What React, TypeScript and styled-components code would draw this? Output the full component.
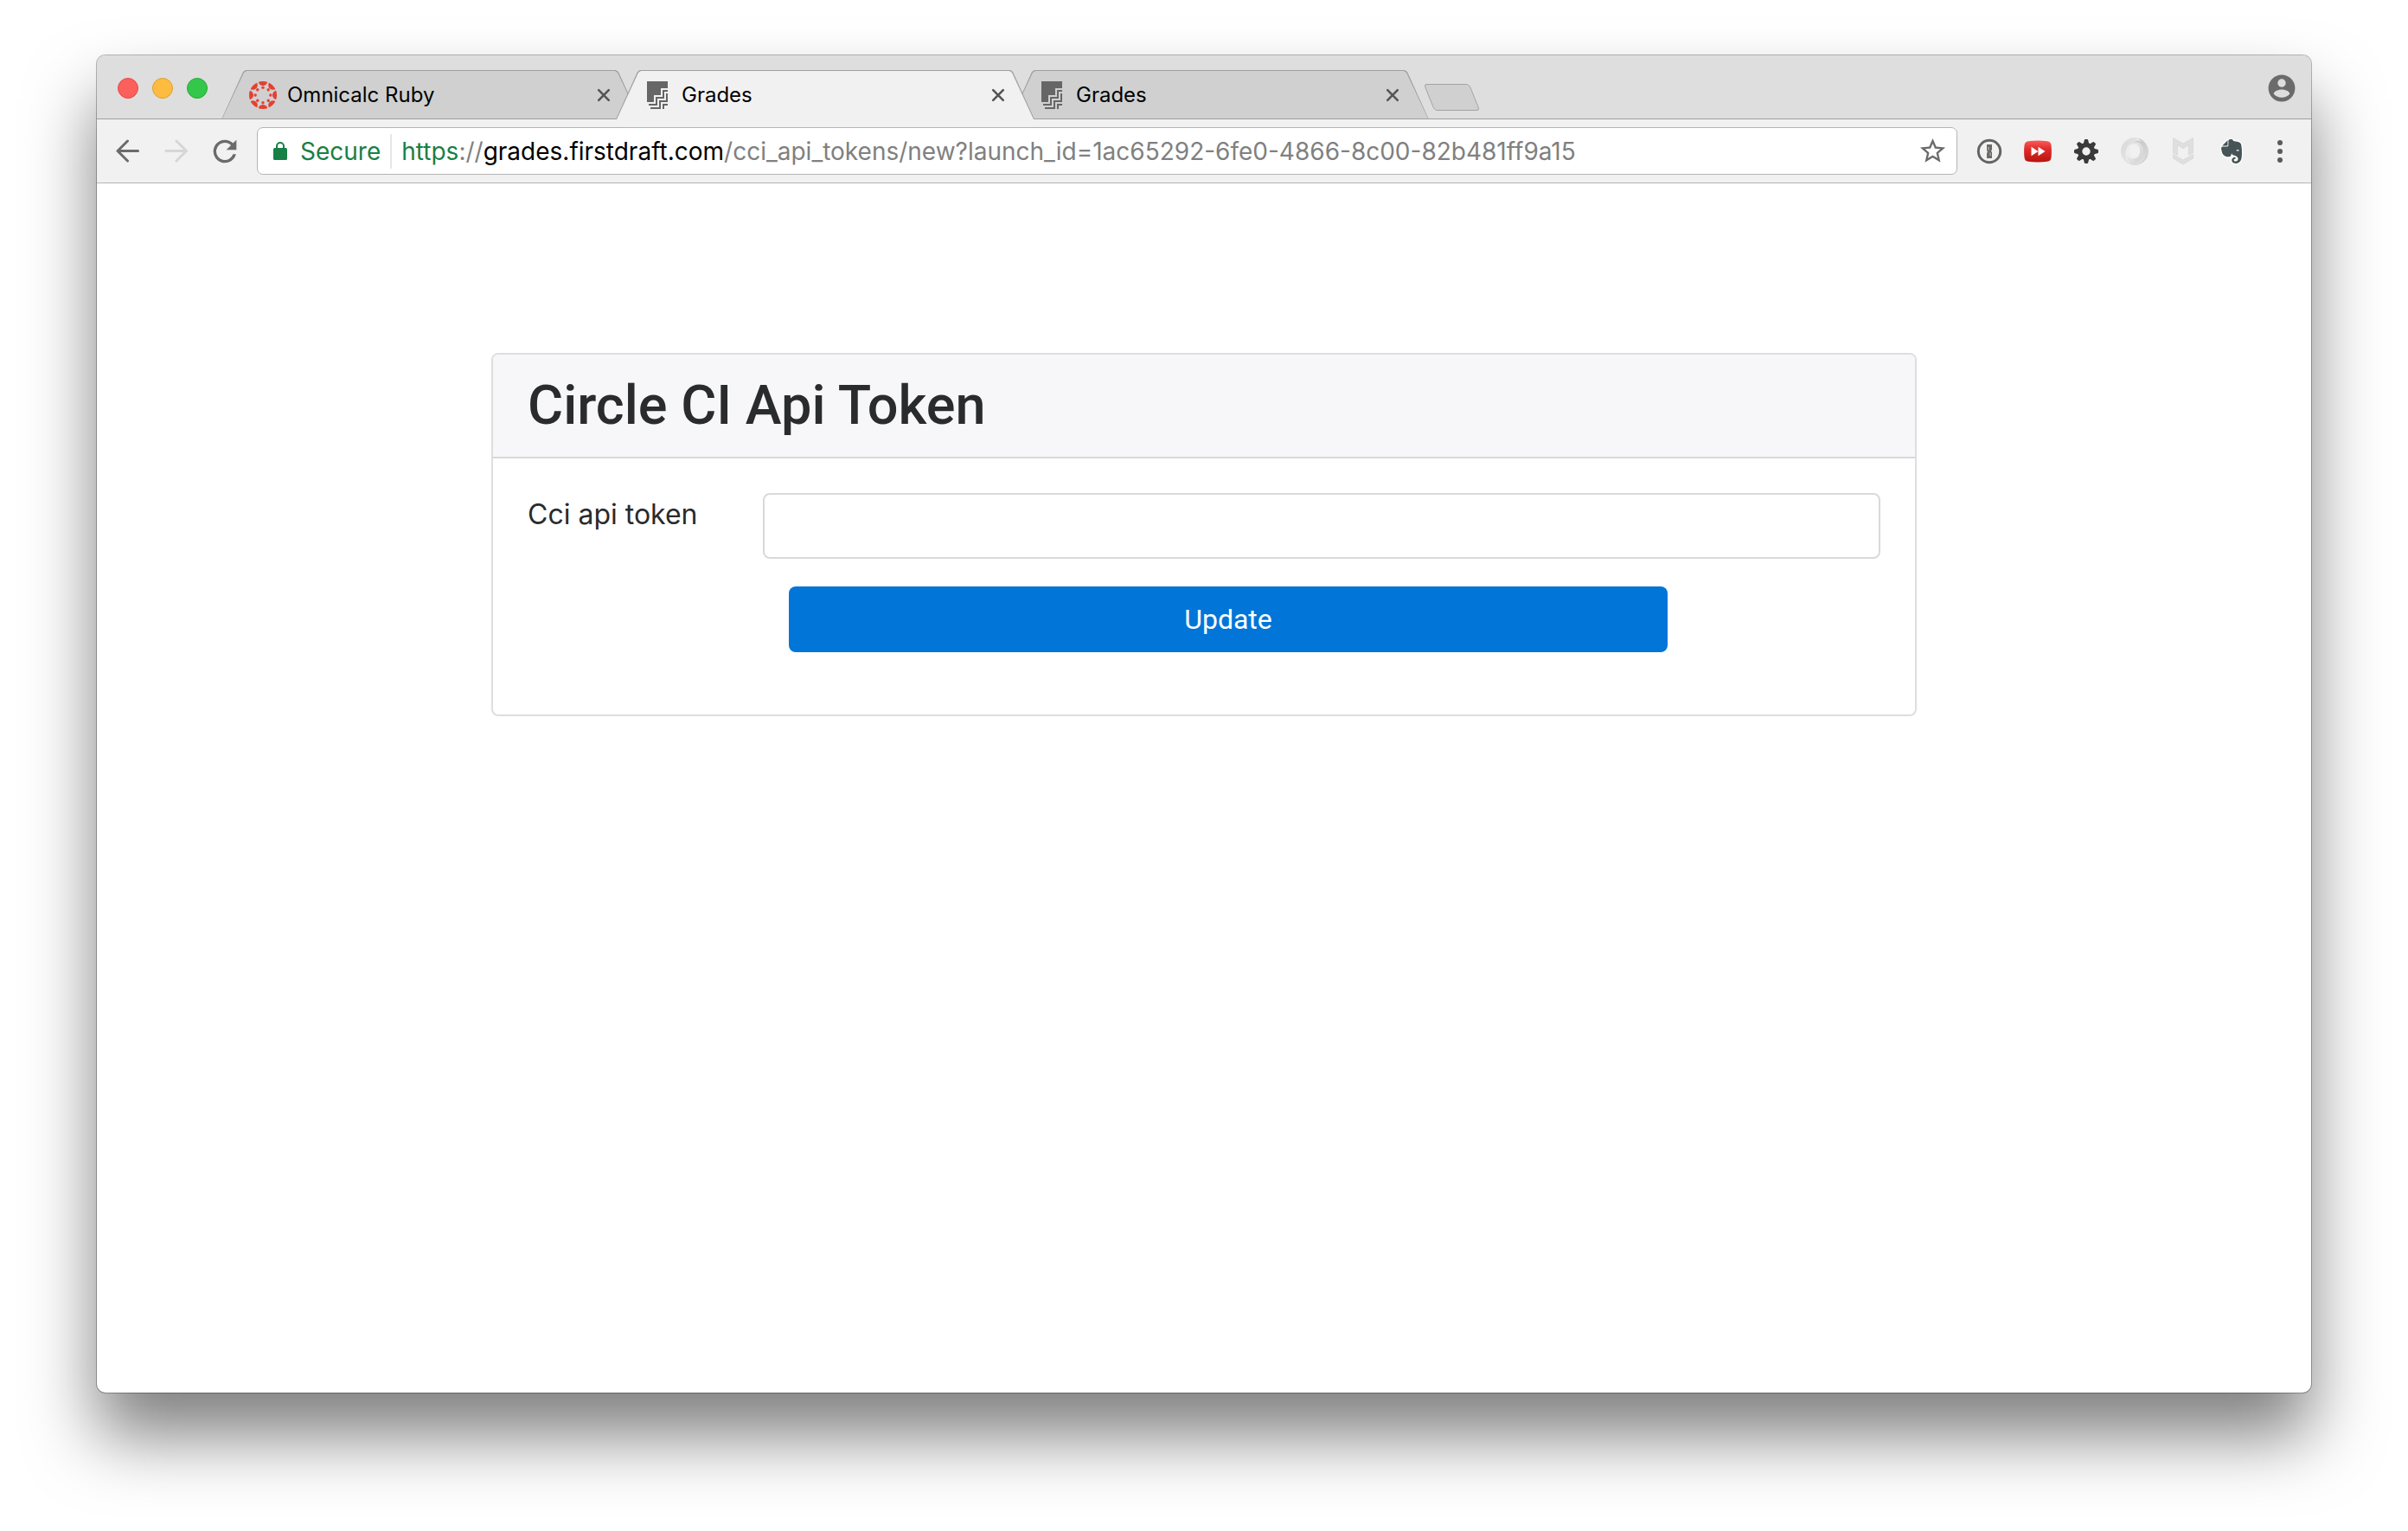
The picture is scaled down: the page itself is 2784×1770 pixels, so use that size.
import React, { useState } from "react";
import styled, { createGlobalStyle } from "styled-components";
import { FaEvernote } from "react-icons/fa";

const uiFont = `Inter, "Liberation Sans", sans-serif`;

const GlobalStyle = createGlobalStyle`
  *, *::before, *::after { box-sizing: border-box; }
  body { margin: 0; background: #fff; font-family: ${uiFont}; }
  button { padding: 0; border: 0; background: none; color: inherit; font: inherit; cursor: pointer; }
`;

/* ---------- window ---------- */

const Desktop = styled.div`
  display: flex;
  min-height: 100vh;
  padding: 64px 112px 160px;
`;

const Window = styled.div`
  flex: 1;
  display: flex;
  flex-direction: column;
  min-width: 0;
  overflow: hidden;
  border-radius: 10px;
  background: #fff;
  box-shadow: 0 0 0 1px rgba(0, 0, 0, 0.28), 0 50px 80px rgba(0, 0, 0, 0.5);
`;

/* ---------- tab strip ---------- */

const TabStrip = styled.header`
  display: flex;
  align-items: flex-end;
  height: 74px;
  padding-left: 24px;
  background: #dedede;
  border-bottom: 1px solid #9f9f9f;
`;

const Lights = styled.div`
  display: flex;
  align-self: flex-start;
  gap: 16px;
  padding: 26px 16px 0 0;
`;

const Light = styled.button<{ $fill: string; $edge: string }>`
  width: 24px;
  height: 24px;
  border-radius: 50%;
  background: ${(p) => p.$fill};
  border: 1px solid ${(p) => p.$edge};
`;

const Tabs = styled.nav`
  display: flex;
  margin-bottom: -1px;
`;

const slant = "polygon(0 100%, 25px 2px, 28px 0, calc(100% - 28px) 0, calc(100% - 25px) 2px, 100% 100%)";

const Tab = styled.div<{ $active: boolean }>`
  position: relative;
  z-index: ${(p) => (p.$active ? 2 : 1)};
  display: flex;
  align-items: center;
  gap: 12px;
  width: 484px;
  height: 57px;
  padding: 0 28px 0 32px;

  & + & { margin-left: -28px; }

  &::before, &::after {
    content: "";
    position: absolute;
    z-index: -1;
    clip-path: ${slant};
  }
  &::before { inset: 0; background: #9f9f9f; }
  &::after {
    inset: 1px 1px ${(p) => (p.$active ? 0 : 1)}px;
    background: ${(p) => (p.$active ? "#f1f1f1" : "#d0d0d0")};
  }
`;

const Favicon = styled.span`
  display: flex;
  justify-content: center;
  width: 32px;
`;

const TabTitle = styled.button`
  flex: 1;
  height: 100%;
  text-align: left;
  font-size: 24px;
  color: #000;
`;

const CloseTab = styled.button`
  display: grid;
  place-items: center;
  width: 28px;
  height: 28px;
`;

const NewTab = styled.button`
  width: 53px;
  height: 31px;
  margin-bottom: 9px;
  border: 1px solid #a3a3a3;
  border-radius: 4px;
  background: #d0d0d0;
  transform: skewX(22deg);
`;

const Profile = styled.button`
  display: grid;
  place-items: center;
  width: 56px;
  height: 56px;
  align-self: flex-start;
  margin: 10px 6px 0 auto;
`;

/* ---------- toolbar ---------- */

const Toolbar = styled.div`
  display: flex;
  align-items: center;
  height: 74px;
  padding: 0 8px;
  background: #f1f1f1;
  border-bottom: 1px solid #b4b4b4;
`;

const ToolButton = styled.button`
  display: grid;
  place-items: center;
  flex: none;
  width: 56px;
  height: 54px;
`;

const Omnibox = styled.div`
  flex: 1;
  display: flex;
  align-items: center;
  min-width: 0;
  height: 55px;
  margin: 0 9px;
  padding-left: 18px;
  border: 1px solid #b4b4b4;
  border-radius: 7px;
  background: #fff;
  font-size: 28px;
`;

const Secure = styled.button`
  display: flex;
  align-items: center;
  gap: 15px;
  height: 40px;
  padding-right: 11px;
  border-right: 2px solid #e6e6e6;
  color: #188046;
`;

const Address = styled.div`
  flex: 1;
  min-width: 0;
  overflow: hidden;
  padding-left: 11px;
  white-space: nowrap;
  color: #808080;
  outline: none;
`;

const Scheme = styled.span`color: #188046;`;
const Host = styled.span`color: #000;`;

/* ---------- page ---------- */

const Page = styled.main`
  flex: 1;
  padding: 196px 30px 60px;
  color: #292b2c;
`;

const Card = styled.section`
  max-width: 1648px;
  margin: 0 auto;
  overflow: hidden;
  border: 2px solid #dedede;
  border-radius: 8px;
`;

const CardHeader = styled.div`
  padding: 24px 40px;
  background: #f7f7f9;
  border-bottom: 2px solid #d9d9da;
`;

const Title = styled.h2`
  margin: 0;
  font-family: Roboto, sans-serif;
  font-size: 63px;
  font-weight: 500;
  line-height: 70px;
`;

const Form = styled.form`
  display: grid;
  grid-template-columns: 272px 1fr;
  row-gap: 32px;
  padding: 40px 40px 72px;
  font-size: 32px;
`;

const Label = styled.label`
  line-height: 50px;
`;

const TextInput = styled.input`
  width: 100%;
  height: 76px;
  padding: 16px 24px;
  border: 2px solid #d9d9d9;
  border-radius: 8px;
  background: #fff;
  color: #464a4c;
  font: 32px ${uiFont};
`;

const Submit = styled.button`
  grid-column: 2;
  height: 76px;
  margin: 0 246px 0 30px;
  border-radius: 8px;
  background: #0275d8;
  color: #fff;
  font: 32px Roboto, sans-serif;
`;

/* ---------- drawings ---------- */

const turns = [0, 45, 90, 135, 180, 225, 270, 315];

const CanvasLogo = () => (
  <svg width="32" height="32" viewBox="-16 -16 32 32" fill="#e63f31" aria-hidden="true">
    <clipPath id="canvas-disc"><circle r="16" /></clipPath>
    <g clipPath="url(#canvas-disc)">
      {turns.map((a) => (
        <g key={a} transform={`rotate(${a})`}>
          <circle cy="-16.4" r="5.4" />
          <circle cy="-8.8" r="1.7" />
        </g>
      ))}
    </g>
  </svg>
);

const DraftLogo = () => (
  <svg width="24" height="32" viewBox="0 0 12 16" fill="none" stroke="#666" aria-hidden="true">
    <path d="M0 0H12V4H8V8H4V12H0Z" fill="#666" stroke="none" />
    <path d="M12 5.5H9.5V9.5H5.5V13.5H1M11.5 7V11.5H7.5V15.5H2M12 13.5H9.5V16" />
  </svg>
);

const Cross = () => (
  <svg width="16" height="16" viewBox="0 0 16 16" stroke="#555" strokeWidth="2.6" strokeLinecap="round" aria-hidden="true">
    <path d="M2.2 2.2L13.8 13.8M13.8 2.2L2.2 13.8" />
  </svg>
);

const Arrow = ({ forward }: { forward?: boolean }) => (
  <svg width="28" height="28" viewBox="0 0 28 28" fill="none" stroke={forward ? "#d6d6d6" : "#6b6b6b"} strokeWidth="3" strokeLinecap="round" strokeLinejoin="round" aria-hidden="true">
    <path d={forward ? "M14 2L25.500 13.500L14 25M25.500 13.500H2" : "M13.500 2L2 13.500L13.500 25M2 13.500H25.500"} />
  </svg>
);

const Reload = () => (
  <svg width="40" height="40" viewBox="0 0 24 24" fill="#6b6b6b" aria-hidden="true">
    <path d="M17.65 6.35A7.96 7.96 0 0 0 12 4a8 8 0 1 0 7.73 10h-2.08A6 6 0 1 1 12 6c1.66 0 3.14.69 4.22 1.78L13 11h7V4z" />
  </svg>
);

const Padlock = () => (
  <svg width="16" height="22" viewBox="0 0 16 22" aria-hidden="true">
    <rect y="7" width="16" height="14" rx="1.6" fill="#188046" />
    <path d="M4 8V5a4 4 0 0 1 8 0V8" fill="none" stroke="#188046" strokeWidth="2" />
  </svg>
);

const Star = () => (
  <svg width="35" height="35" viewBox="0 0 24 24" fill="#6b6b6b" aria-hidden="true">
    <path d="M22 9.24l-7.19-.62L12 2 9.19 8.63 2 9.24l5.46 4.73L5.82 21 12 17.27 18.18 21l-1.63-7.03zM12 15.4l-3.76 2.27 1-4.28-3.32-2.88 4.38-.38L12 6.1l1.71 4.04 4.38.38-3.32 2.88 1 4.28z" />
  </svg>
);

const Person = () => (
  <svg width="32" height="32" viewBox="-16 -16 32 32" aria-hidden="true">
    <circle r="15.4" fill="#6b6b6b" />
    <circle cy="-6" r="4.7" fill="#dedede" />
    <path d="M-9.4 6.2C-8.6 2.9-3.4 1.4 0 1.4S8.6 2.9 9.4 6.2C7.5 9 3.9 10.8 0 10.8S-7.5 9-9.4 6.2Z" fill="#dedede" />
  </svg>
);

const OnePassword = () => (
  <svg width="30" height="30" viewBox="-15 -15 30 30" aria-hidden="true">
    <circle r="12.7" fill="#f1f1f1" stroke="#666462" strokeWidth="3" />
    <path d="M-3-8H3V-2L2 -.5L3 1V8H-3V2L-2 .5L-3-1Z" fill="#6c6a68" />
    <path d="M-1-5V-1.500M1 5V1.500" fill="none" stroke="#aaa8a6" strokeWidth="1.400" />
  </svg>
);

const FastForward = () => (
  <svg width="32" height="26" viewBox="0 0 32 26" aria-hidden="true">
    <linearGradient id="ff-red" x1="0" y1="0" x2="0" y2="1">
      <stop offset="0" stopColor="#fb5a58" />
      <stop offset="0.4" stopColor="#e02b2b" />
      <stop offset="1" stopColor="#b81410" />
    </linearGradient>
    <path d="M5 1.2Q16-.2 27 1.2Q31 1.6 31.5 6Q32.3 13 31.5 20Q31 24.4 27 24.8Q16 26.2 5 24.8Q1 24.4 .5 20Q-.3 13 .5 6Q1 1.6 5 1.2Z" fill="url(#ff-red)" />
    <path d="M8.5 7.8L16.5 13L8.5 18.2ZM16.5 7.8L24.5 13L16.5 18.2Z" fill="#fff" />
  </svg>
);

const Gear = () => (
  <svg width="28" height="28" viewBox="-14 -14 28 28" aria-hidden="true">
    <g fill="#3a3a3a">
      {turns.map((a) => (
        <path key={a} transform={`rotate(${a})`} d="M-3.4-8L-2.2-13Q-2-14-1-14H1Q2-14 2.2-13L3.4-8Z" />
      ))}
    </g>
    <circle r="7.4" fill="none" stroke="#3a3a3a" strokeWidth="5.4" />
  </svg>
);

const Swirl = () => (
  <svg width="32" height="32" viewBox="-16 -16 32 32" aria-hidden="true">
    <linearGradient id="swirl-a" x1="0" y1="0" x2="1" y2="0.6">
      <stop offset="0" stopColor="#d6d6d6" />
      <stop offset="0.5" stopColor="#e4e4e4" />
      <stop offset="1" stopColor="#d2d2d2" />
    </linearGradient>
    <linearGradient id="swirl-b" x1="0" y1="0" x2="0" y2="1">
      <stop offset="0" stopColor="#c6c6c6" />
      <stop offset="1" stopColor="#e2e2e2" />
    </linearGradient>
    <path fillRule="evenodd" d="M0-16A16 16 0 1 1 0 16A16 16 0 1 1 0-16ZM0-8.500C-3.500-8.500-6-5-6-.5S-3.500 8 0 8S6 4 6-.5S3.500-8.500 0-8.500Z" fill="url(#swirl-a)" />
    <path d="M4-15.500C14-12 16-2 13 5C10 12 5 15 0 15.500C6 12 10 6 10-1C10-8 5-12-1-10.500C2-13 6-12 8-11C7-13 6-14.500 4-15.500Z" fill="url(#swirl-b)" />
    <path d="M-4 15C-9 12-11 6-10 0C-9.500-5-6-9-1-9.500C-4-8-6-4.500-6-.5C-6 4-3.500 8 0 8C-4 10-8 7-8.500 3C-9 8-7 12-4 15Z" fill="#ededed" />
  </svg>
);

const Shield = () => (
  <svg width="24" height="32" viewBox="0 0 24 32" fill="#dfdfdf" stroke="#d2d2d2" strokeWidth="0.6" aria-hidden="true">
    <path d="M.5.5L12 7L23.5.5V17.5L18.5 20.2V8.8L12 12.6L5.5 8.8V20.2L.5 17.5Z" />
    <path d="M.5 19.5L12 26L23.5 19.5V24L12 31L.5 24Z" />
  </svg>
);

const Elephant = styled(FaEvernote)`
  width: 24px;
  height: 32px;
  overflow: visible;
  color: #475457;

  path {
    stroke: #fff;
    stroke-width: 44px;
    stroke-linejoin: round;
    paint-order: stroke;
  }
`;

const Dots = () => (
  <svg width="8" height="28" viewBox="0 0 8 28" fill="#5a5a5a" aria-hidden="true">
    <circle cx="4" cy="4" r="3" />
    <circle cx="4" cy="14" r="3" />
    <circle cx="4" cy="24" r="3" />
  </svg>
);

/* ---------- app ---------- */

const lights = [
  { name: "Close", fill: "#fc605c", edge: "#e04c48" },
  { name: "Minimize", fill: "#fdbc40", edge: "#de9f34" },
  { name: "Zoom", fill: "#34c84a", edge: "#27aa35" },
];

const tabs = [
  { title: "Omnicalc Ruby", icon: <CanvasLogo /> },
  { title: "Grades", icon: <DraftLogo /> },
  { title: "Grades", icon: <DraftLogo /> },
];

const extensions = [
  { name: "1Password", icon: <OnePassword /> },
  { name: "Video speed", icon: <FastForward /> },
  { name: "Settings", icon: <Gear /> },
  { name: "JSON viewer", icon: <Swirl /> },
  { name: "Site advisor", icon: <Shield /> },
  { name: "Evernote", icon: <Elephant /> },
  { name: "Menu", icon: <Dots /> },
];

export default function App() {
  const [active, setActive] = useState(1);
  const [token, setToken] = useState("");

  return (
    <>
      <GlobalStyle />
      <Desktop>
        <Window>
          <TabStrip>
            <Lights>
              {lights.map((l) => (
                <Light key={l.name} aria-label={l.name} $fill={l.fill} $edge={l.edge} />
              ))}
            </Lights>
            <Tabs aria-label="Tabs">
              {tabs.map((t, i) => (
                <Tab key={i} $active={i === active}>
                  <Favicon>{t.icon}</Favicon>
                  <TabTitle onClick={() => setActive(i)}>{t.title}</TabTitle>
                  <CloseTab aria-label={`Close ${t.title}`}><Cross /></CloseTab>
                </Tab>
              ))}
            </Tabs>
            <NewTab aria-label="New tab" />
            <Profile aria-label="Profile"><Person /></Profile>
          </TabStrip>

          <Toolbar>
            <ToolButton aria-label="Back"><Arrow /></ToolButton>
            <ToolButton aria-label="Forward"><Arrow forward /></ToolButton>
            <ToolButton aria-label="Reload"><Reload /></ToolButton>
            <Omnibox>
              <Secure><Padlock />Secure</Secure>
              <Address role="textbox" aria-label="Address" contentEditable suppressContentEditableWarning spellCheck={false}>
                <Scheme>https</Scheme>://<Host>grades.firstdraft.com</Host>/cci_api_tokens/new?launch_id=1ac65292-6fe0-4866-8c00-82b481ff9a15
              </Address>
              <ToolButton aria-label="Bookmark this page"><Star /></ToolButton>
            </Omnibox>
            {extensions.map((e) => (
              <ToolButton key={e.name} aria-label={e.name}>{e.icon}</ToolButton>
            ))}
          </Toolbar>

          <Page>
            <Card>
              <CardHeader>
                <Title>Circle CI Api Token</Title>
              </CardHeader>
              <Form onSubmit={(e) => e.preventDefault()}>
                <Label htmlFor="cci-token">Cci api token</Label>
                <TextInput id="cci-token" type="text" value={token} onChange={(e) => setToken(e.target.value)} />
                <Submit type="submit">Update</Submit>
              </Form>
            </Card>
          </Page>
        </Window>
      </Desktop>
    </>
  );
}
